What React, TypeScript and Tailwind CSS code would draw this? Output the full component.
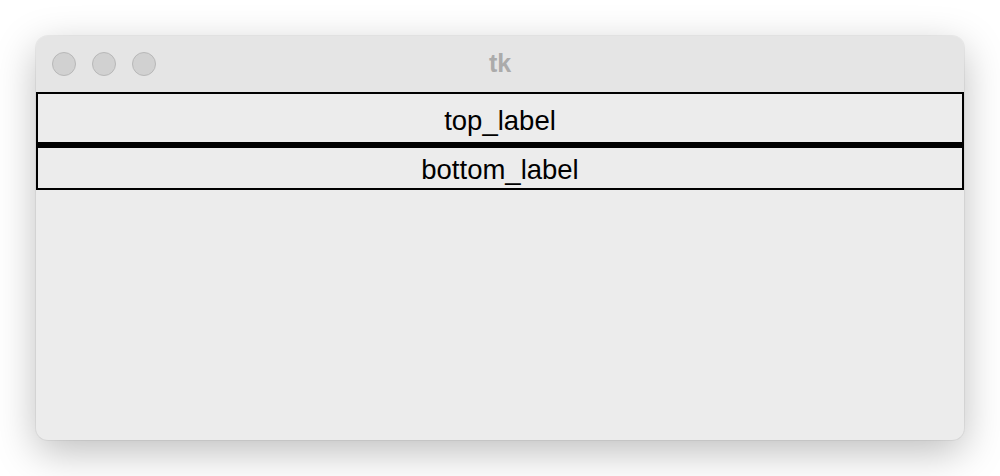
import React from "react";

export default function App() {
  return (
    <div className="w-[1000px] h-[476px] bg-white p-[36px]" style={{ fontFamily: '"Liberation Sans", Arial, sans-serif' }}>
      <div className="w-[928px] h-[404px] rounded-[12px] overflow-hidden bg-[#ececec] flex flex-col shadow-[0_12px_40px_rgba(0,0,0,0.26),0_0_0_1px_rgba(0,0,0,0.05)]">
        <div className="relative h-[56px] bg-[#e5e5e5] flex items-center pl-[16px] gap-[16px] shrink-0">
          <div className="w-[24px] h-[24px] rounded-full bg-[#d1d1d1] border border-[#b8b8b8]" />
          <div className="w-[24px] h-[24px] rounded-full bg-[#d1d1d1] border border-[#b8b8b8]" />
          <div className="w-[24px] h-[24px] rounded-full bg-[#d1d1d1] border border-[#b8b8b8]" />
          <div className="absolute inset-0 flex items-center justify-center text-[25px] font-bold text-[#ababab] leading-none pb-[1px]">tk</div>
        </div>
        <div className="h-[50px] border-x-2 border-t-2 border-black flex items-center justify-center text-[27.5px] text-black leading-none pt-[5px]">
          top_label
        </div>
        <div className="h-[6px] bg-black" />
        <div className="h-[42px] border-x-2 border-b-2 border-black flex items-center justify-center text-[27.5px] text-black leading-none pt-[4px]">
          bottom_label
        </div>
      </div>
    </div>
  );
}
